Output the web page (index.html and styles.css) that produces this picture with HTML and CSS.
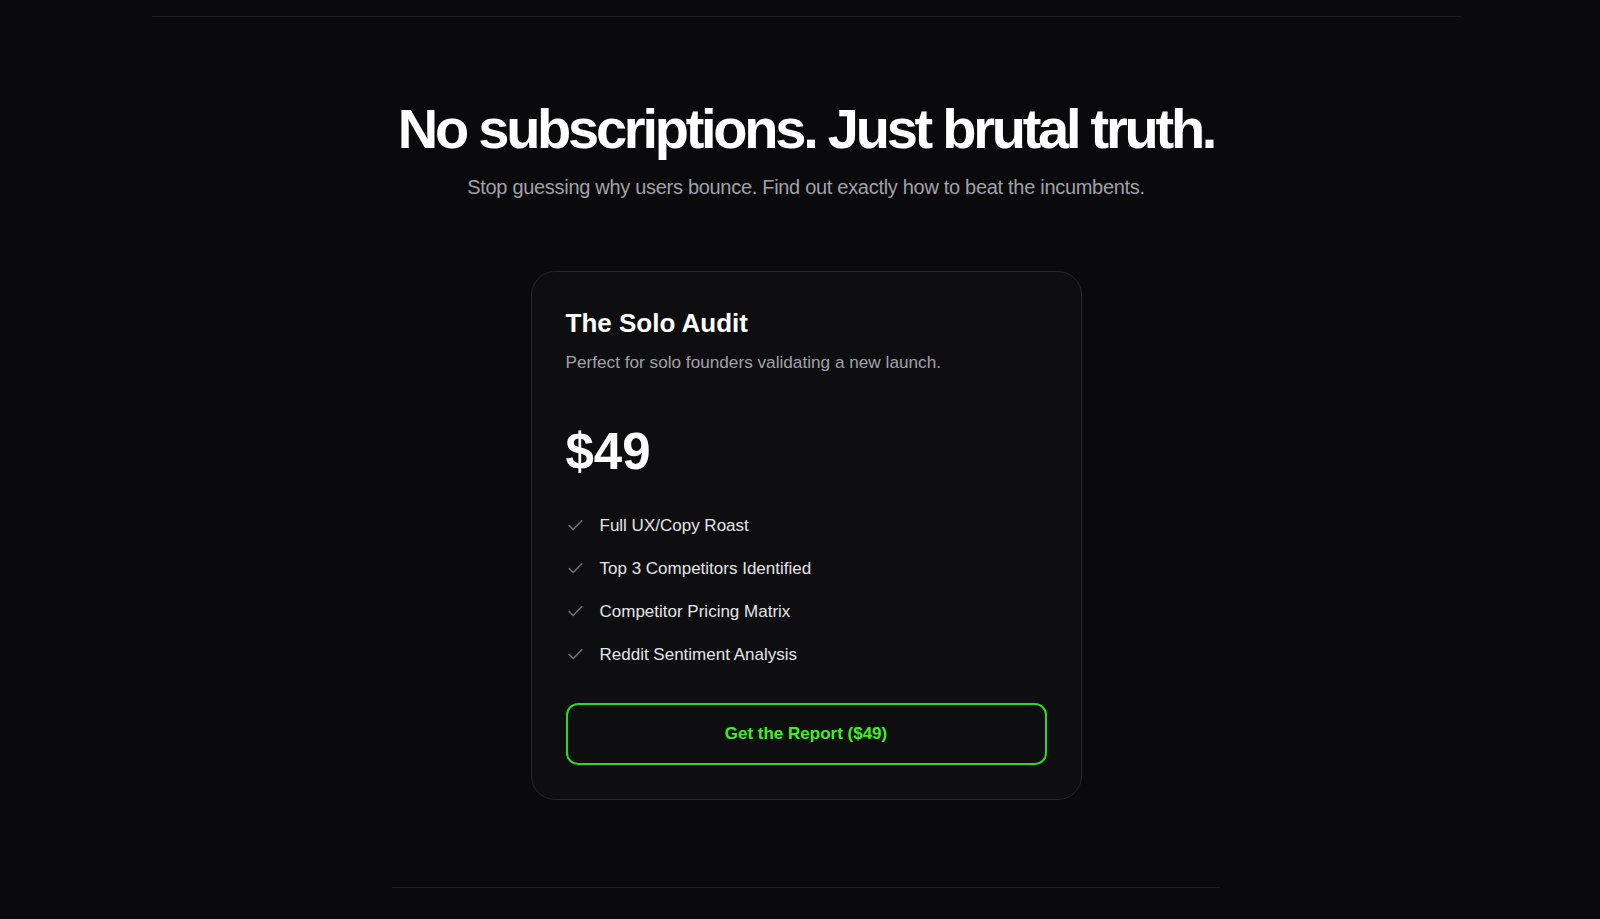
FILE: index.html
```html
<!DOCTYPE html>
<html lang="en">
<head>
  <meta charset="UTF-8" />
  <title>Pricing - The Solo Audit</title>
  <link rel="stylesheet" href="styles.css">
</head>
<body>
  <div class="page">
    <div class="top-rule"></div>

    <section class="pricing">
      <h1>No subscriptions. Just brutal truth.</h1>
      <p class="lead">Stop guessing why users bounce. Find out exactly how to beat the incumbents.</p>

      <div class="plan">
        <h2>The Solo Audit</h2>
        <p class="plan-desc">Perfect for solo founders validating a new launch.</p>

        <div class="price">$49</div>

        <ul class="features">
          <li>
            <svg class="check" viewBox="0 0 24 24" fill="none" stroke="currentColor" stroke-width="2" stroke-linecap="round" stroke-linejoin="round"><polyline points="20 6 9 17 4 12"></polyline></svg>
            Full UX/Copy Roast
          </li>
          <li>
            <svg class="check" viewBox="0 0 24 24" fill="none" stroke="currentColor" stroke-width="2" stroke-linecap="round" stroke-linejoin="round"><polyline points="20 6 9 17 4 12"></polyline></svg>
            Top 3 Competitors Identified
          </li>
          <li>
            <svg class="check" viewBox="0 0 24 24" fill="none" stroke="currentColor" stroke-width="2" stroke-linecap="round" stroke-linejoin="round"><polyline points="20 6 9 17 4 12"></polyline></svg>
            Competitor Pricing Matrix
          </li>
          <li>
            <svg class="check" viewBox="0 0 24 24" fill="none" stroke="currentColor" stroke-width="2" stroke-linecap="round" stroke-linejoin="round"><polyline points="20 6 9 17 4 12"></polyline></svg>
            Reddit Sentiment Analysis
          </li>
        </ul>

        <button class="buy-btn">Get the Report ($49)</button>
      </div>
    </section>

    <div class="bottom-rule"></div>
  </div>
</body>
</html>
```

FILE: styles.css
```css
html, body {
  margin: 0;
  padding: 0;
  background-color: #0a0a0c;
}
body {
  font-family: "Liberation Sans", Arial, sans-serif;
  color: #fafafa;
  min-height: 919px;
}
.page {
  padding-left: 12px;
}
.top-rule {
  max-width: 1309px;
  height: 16px;
  margin: 0 auto;
  border-bottom: 1px solid #1e1e21;
}
.pricing {
  text-align: center;
  padding-top: 80px;
}
h1 {
  margin: 0;
  font-size: 56px;
  line-height: 64px;
  font-weight: 700;
  letter-spacing: -3.25px;
  color: #ffffff;
}
.lead {
  margin: 12px 0 0;
  font-size: 20px;
  line-height: 28px;
  letter-spacing: -0.3px;
  color: #a1a1aa;
}
.plan {
  width: 481px;
  margin: 70px auto 0;
  padding: 34px;
  text-align: left;
  background-color: #0e0e10;
  border: 1px solid #27272a;
  border-radius: 24px;
}
.plan h2 {
  margin: 0;
  font-size: 26px;
  line-height: 34px;
  font-weight: 700;
  color: #ffffff;
}
.plan-desc {
  margin: 10px 0 0;
  font-size: 17.2px;
  line-height: 24px;
  color: #a1a1aa;
}
.price {
  margin-top: 48px;
  font-size: 51px;
  line-height: 60px;
  font-weight: 700;
  color: #ffffff;
}
.features {
  list-style: none;
  margin: 22px 0 0;
  padding: 0;
}
.features li {
  display: flex;
  align-items: center;
  gap: 15px;
  height: 43px;
  font-size: 17px;
  color: #e4e4e7;
}
.check {
  width: 19px;
  height: 19px;
  color: #71717a;
  flex-shrink: 0;
}
.buy-btn {
  display: block;
  width: 100%;
  height: 62px;
  margin-top: 27px;
  background: transparent;
  border: 2px solid #2ed820;
  border-radius: 12px;
  color: #3cf021;
  font-family: inherit;
  font-size: 17px;
  font-weight: 700;
  cursor: pointer;
}
.buy-btn:hover {
  background-color: rgba(57, 255, 20, 0.06);
}
.bottom-rule {
  width: 828px;
  margin: 87px auto 0;
  border-top: 1px solid #1e1e21;
}
```
